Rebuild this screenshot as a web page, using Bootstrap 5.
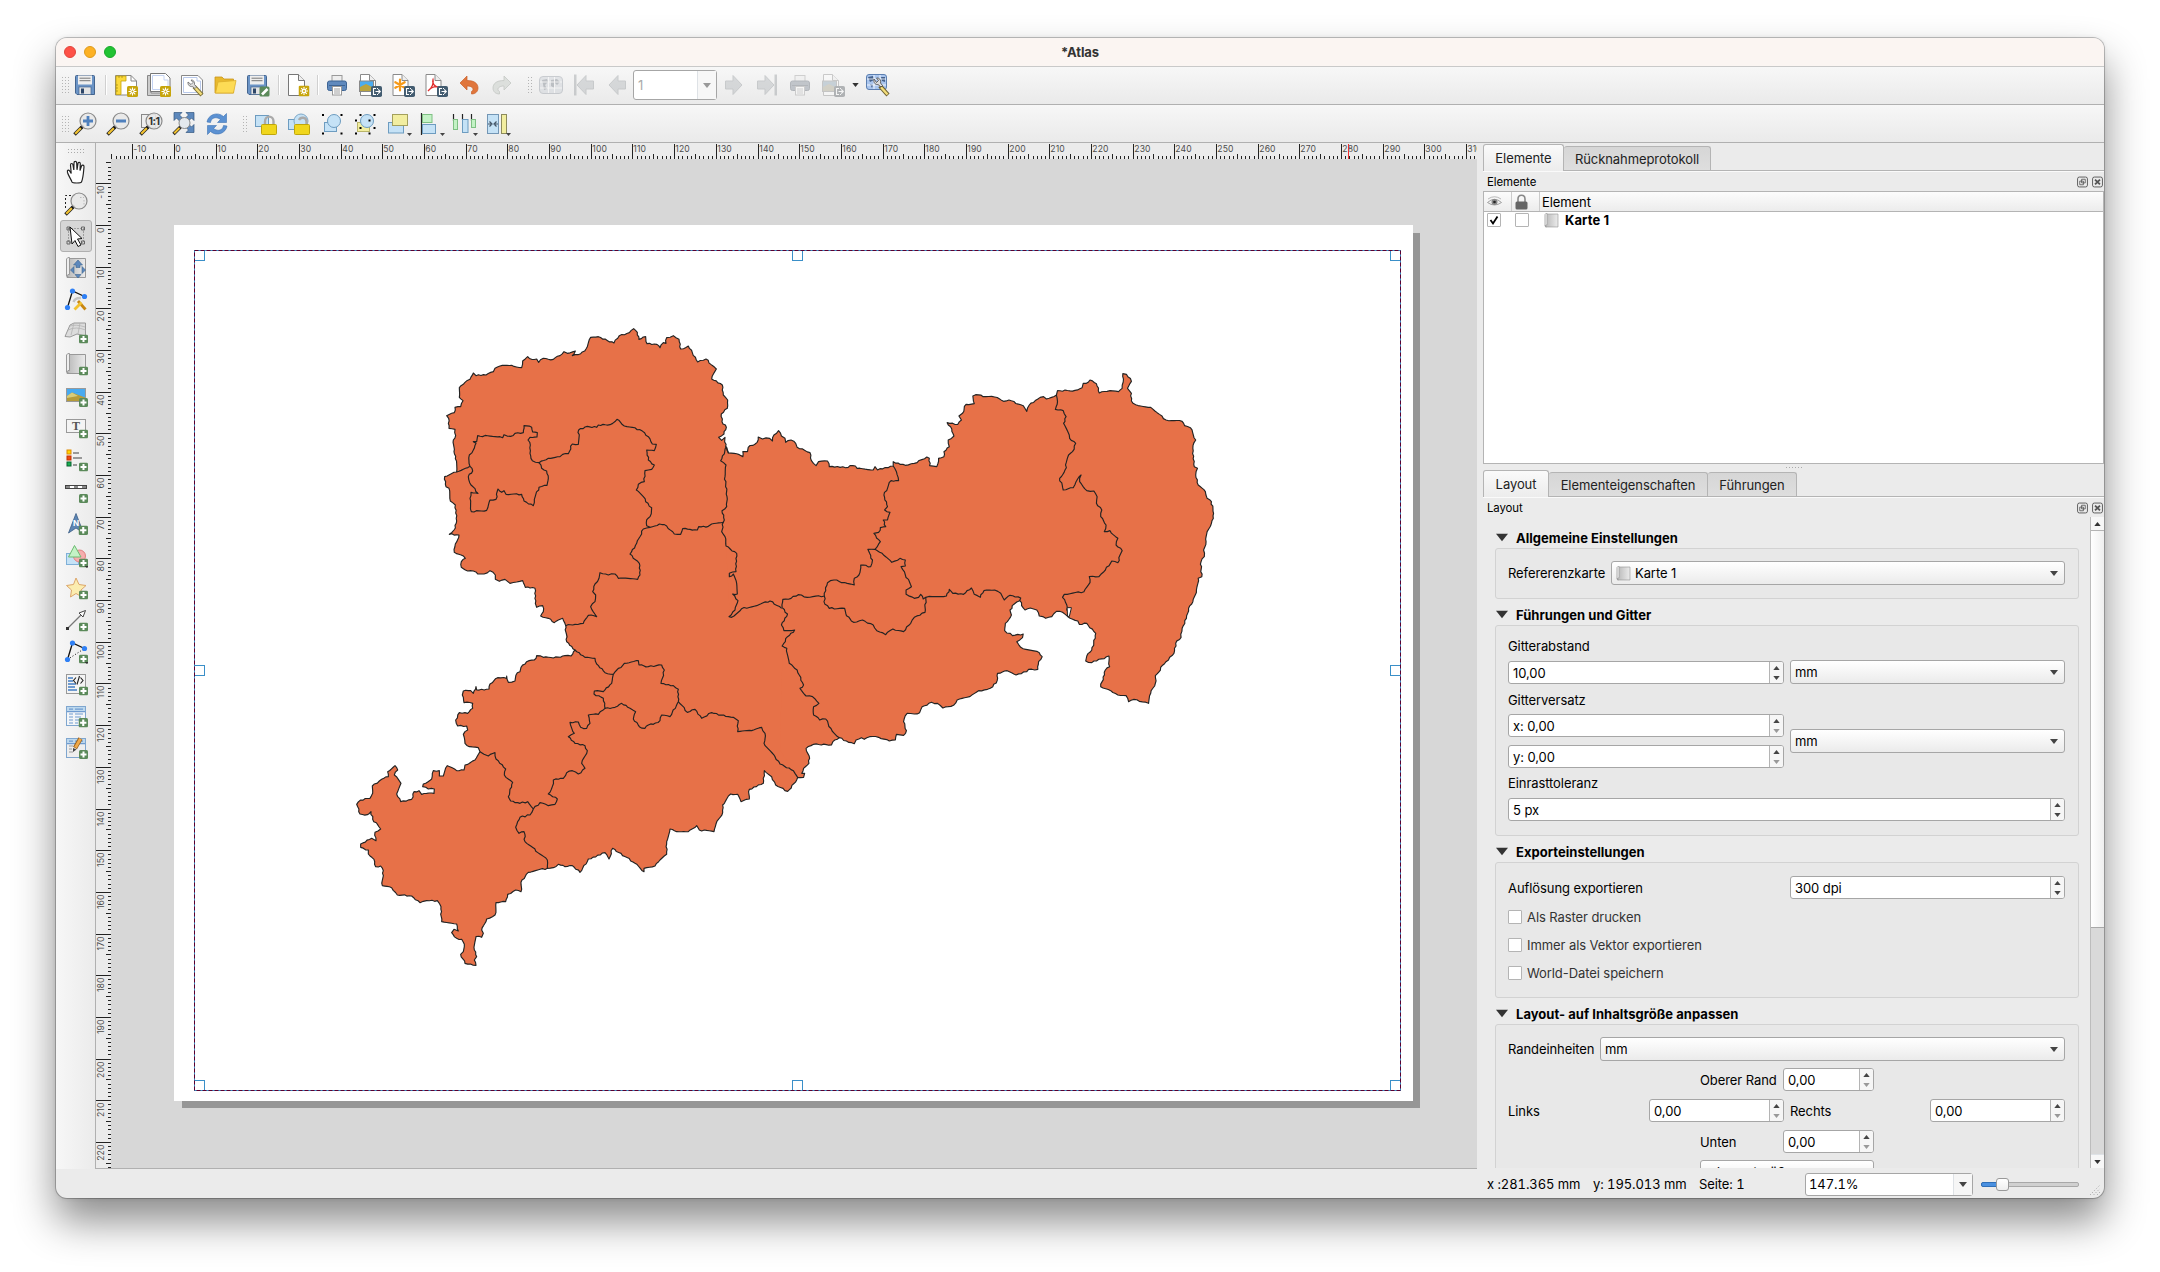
<!DOCTYPE html>
<html lang="de">
<head>
<meta charset="utf-8">
<title>Atlas</title>
<link href="https://cdn.jsdelivr.net/npm/bootstrap@5.3.0/dist/css/bootstrap.min.css" rel="stylesheet">
<style>
body{background:#fff;font-family:Inter,"Liberation Sans",sans-serif;font-size:13px;line-height:16px;letter-spacing:-.08px;color:#000;width:2160px;height:1272px;overflow:hidden;padding:38px 56px}
svg{display:block;flex:none}
.win{width:2048px;height:1160px;border-radius:11px;background:#ebebeb;box-shadow:0 0 0 1px rgba(0,0,0,.22),0 0 5px rgba(0,0,0,.1),0 23px 42px rgba(0,0,0,.46);overflow:hidden}
.titlebar{height:29px;background:#fbf5f2;border-bottom:1px solid #c9c9c9;color:#333}
.lights{left:8px;top:8px;gap:8px}
.lights i{width:12px;height:12px;border-radius:50%;border:1px solid}
.tbar{height:38px;background:linear-gradient(#f7f7f7,#eaeaea);border-bottom:1px solid #b0b0b0;padding-left:5px}
#bar1{padding-bottom:1px}
.tb{width:33px;height:32px;display:flex;align-items:center;justify-content:center;flex:none}
.tb svg{width:24px;height:24px}
.grip{width:7.5px;height:18px;flex:none;background:radial-gradient(circle,#b4b4b4 .8px,transparent 1px) 0 0/3px 3px}
.vsep{width:8px;height:20px;flex:none;display:flex;justify-content:center}
.vsep::before{content:"";width:1px;background:#d0d0d0;box-shadow:1px 0 #fff}
.off{opacity:.4;filter:grayscale(.75)}
.side{width:39px;background:linear-gradient(90deg,#f7f7f7,#ebebeb);padding-top:5px}
.side .tb{width:32px;height:32.05px}
.side .tb.on{background:#d6d6d6;border:1px solid #b0b0b0;border-radius:3px}
.work{width:1382px;border-left:1px solid #b0b0b0;border-bottom:1px solid #b0b0b0;background:#ebebeb}
.dock{width:627px;padding-left:6px}
.dtabs{border-bottom:1px solid #b4b4b4;box-shadow:0 1px #fafafa;height:27px;align-items:flex-end}
.dtab{height:24px;background:linear-gradient(#d6d6d6,#dedede);border:1px solid #b4b4b4;border-bottom:0;border-left-width:0;border-radius:3px 3px 0 0;line-height:25px;text-align:center;color:#222}
.dtab.on{height:27px;background:linear-gradient(#fafafa,#ececec);border-left-width:1px;margin-bottom:-1px;line-height:27px}
.dtitle{font-size:11.4px;height:20px;padding:1px 2px 0 4px}
.tree{height:273px;background:#fff;border:1px solid #b4b4b4}
.thead{height:20px;background:linear-gradient(#fcfcfc,#ececec);border-bottom:1px solid #b4b4b4}
.thead>div{border-right:1px solid #ccc;height:100%;width:28px;display:flex;align-items:center}
.cb{width:14px;height:14px;background:#fff;border:1px solid #b4b4b4;border-radius:1px;flex:none}
.dots{width:17px;height:3px;background:radial-gradient(circle,#aaa .7px,transparent 1px) 0 0/3px 3px}
.scroller{height:651px;overflow:hidden}
.sec{height:21px;margin-top:5px;font-weight:700;padding-left:1px;gap:8px;letter-spacing:.03px}
.gbox{width:584px;background:#e8e8e8;border:1px solid #d2d2d2;border-radius:3px;padding:0 13px 0 12px}
.gbox .lab{height:16px}
.combo{height:24px;border:1px solid #a6a6a6;border-radius:3px;background:linear-gradient(#fff,#ebebeb);padding:0 6px 0 4px}
.spin{height:23px;border:1px solid #a6a6a6;border-radius:3px;background:#fff;padding-left:4px}
.spin .ud{width:14px;height:100%;border-left:1px solid #b4b4b4;background:#f6f6f6;border-radius:0 2px 2px 0;padding:4px 0 3px}
.sbar{width:14px;border-left:1px solid #bcbcbc;background:#d9d9d9}
.sbar .knob{height:397px;background:linear-gradient(90deg,#fff,#efefef);border-bottom:1px solid #a8a8a8}
.sbar .sb{height:14px;background:#f7f7f7;border-bottom:1px solid #b4b4b4}
.status{height:30px;font-feature-settings:"tnum"}
.pg{width:84px;height:30px;border:1px solid #a6a6a6;border-radius:3px;background:#fff;color:#aaa}
.track{width:98px;height:5px;border:1px solid #a8a8a8;border-radius:2px;background:#d0d0d0;position:relative}
.track b{position:absolute;left:-1px;top:-1px;width:18px;height:5px;background:#4a90e0;border:1px solid #2f6fb8;border-radius:2px}
.track i{position:absolute;left:14px;top:-5px;width:13px;height:13px;background:linear-gradient(#fff,#eee);border:1px solid #999;border-radius:3px}
.rt{font-size:8.6px;fill:#4d4d4d;letter-spacing:.1px}
</style>
<script src="https://cdn.jsdelivr.net/npm/bootstrap@5.3.0/dist/js/bootstrap.bundle.min.js"></script>
</head>
<body>
<svg width="0" height="0" class="position-absolute" aria-hidden="true"><defs>
<linearGradient id="gb" x2="0" y2="1"><stop stop-color="#5b8ac9"/><stop offset="1" stop-color="#3a65a0"/></linearGradient>
<linearGradient id="gs" x2="1" y2="0"><stop stop-color="#b8b8b8"/><stop offset="1" stop-color="#ececec"/></linearGradient>
<symbol id="bnew" viewBox="0 0 11 11"><rect width="11" height="11" rx="1.6" fill="#c7a50b"/><path d="M5.500 1.500V9.500M1.500 5.500H9.500M2.700 2.700L8.300 8.300M8.300 2.700L2.700 8.300" stroke="#fff" stroke-width="1.100"/><circle cx="5.500" cy="5.500" r="2" fill="#fff"/><circle cx="5.500" cy="5.500" r="1" fill="#c7a50b"/></symbol>
<symbol id="bexp" viewBox="0 0 11 11"><rect width="11" height="11" rx="1.800" fill="#435c70"/><path d="M5 2.500H2.500V8.500H5M4.500 5.500H9M7.200 3.300L9.300 5.500L7.200 7.700M6 2.500H7M6 8.500H7" fill="none" stroke="#fff" stroke-width="1.100"/></symbol>
<symbol id="bplus" viewBox="0 0 9 9"><rect width="9" height="9" rx="1.500" fill="#5b8a5a"/><path d="M4.500 1.500V7.500M1.500 4.500H7.500" stroke="#fff" stroke-width="2"/></symbol>
<symbol id="lens" viewBox="0 0 24 24"><path d="M9.500 14.500L1.500 22.500" stroke="#222" stroke-width="3.600"/><path d="M8 16L2.200 21.800" stroke="#f2c230" stroke-width="2.200"/><path d="M10.500 13.500L8 16" stroke="#111" stroke-width="2.500"/><circle cx="15" cy="9" r="8" fill="#e8e8e8" fill-opacity=".9" stroke="#8a8a8a" stroke-width="1.200"/></symbol>
<symbol id="page" viewBox="0 0 24 24"><path d="M4.500 1.500H13.500L19.500 7.500V22.500H4.500Z" fill="#fff" stroke="#8a8a8a"/><path d="M13.500 1.500V7.500H19.500" fill="#eee" stroke="#8a8a8a"/></symbol>
<symbol id="save" viewBox="0 0 24 24"><path d="M2.500 3.500Q2.500 2.500 3.500 2.500H20.500Q21.500 2.500 21.500 3.500V21.500H4L2.500 20Z" fill="#6b94c6" stroke="#44658f"/><rect x="5" y="2.500" width="14" height="9" fill="#eee"/><path d="M6.500 5.200H17.500M6.500 7.700H17.500" stroke="#777"/><rect x="6" y="14" width="12" height="7.500" fill="#e4e4e4" stroke="#44658f" stroke-width=".7"/><rect x="8" y="15.500" width="3" height="5" fill="#2d4668"/></symbol>
<symbol id="newlay" viewBox="0 0 24 24"><path d="M1.500 2.500H17L22.500 8V22H1.500Z" fill="#fff" stroke="#888"/><path d="M2 3H12V8H7V21.500H2Z" fill="#fbd93c" stroke="#c7a50b" stroke-width=".8"/><path d="M2 12H4M2 15H4M2 18H4M5 3V5M8 3V5" stroke="#927808" stroke-width=".6"/><path d="M17 2.500V8H22.500" fill="none" stroke="#888"/><use href="#bnew" x="13" y="13" width="11" height="11"/></symbol>
<symbol id="dup" viewBox="0 0 24 24"><path d="M.5 2.500H4V20H20V22.500H.5Z" fill="#ccc" stroke="#888"/><path d="M3.500 .5H18.500L23 5V18.500H3.500Z" fill="#fff" stroke="#777"/><path d="M5.500 2.500H17V7H21V16.500H5.500Z" fill="none" stroke="#c4d3f2"/><use href="#bnew" x="13" y="13" width="11" height="11"/></symbol>
<symbol id="tools" viewBox="0 0 24 24"><path d="M1.500 2.500H18L22.500 7V21.500H1.500Z" fill="#fff" stroke="#888"/><path d="M3.500 4.500H17V8H20.500V19.500H3.500Z" fill="none" stroke="#b8c8ea"/><path d="M14 13.500L22 22" stroke="#7d7036" stroke-width="4.200"/><path d="M14.500 14L21.500 21.500" stroke="#f3dd7a" stroke-width="2.400"/><path d="M8 9C7.500 12.500 10.500 14 12.500 13.500L15 15.500L16.500 14L14.500 11.500C15 9 13.500 6.700 11 7L13 9.500L11 11.500Z" fill="#ddd" stroke="#666" stroke-width=".8"/></symbol>
<symbol id="open" viewBox="0 0 24 24"><path d="M2 4H9L11 6H20.500V20H2Z" fill="#e8b92e" stroke="#c9961c" stroke-width=".8"/><path d="M5 9L23 7.500L20.500 20H2.500Z" fill="#fddb55" stroke="#dcae2b" stroke-width=".8"/></symbol>
<symbol id="saveas" viewBox="0 0 24 24"><use href="#save" x="-1" width="24" height="24"/><rect x="13.500" y="13.500" width="10" height="10" rx="1.500" fill="#5b8a5a"/><path d="M16 21.500L21.500 16" stroke="#fff" stroke-width="2.600"/></symbol>
<symbol id="newpage" viewBox="0 0 24 24"><path d="M2.500 1.500H12.500L18.500 7.500V22.500H2.500Z" fill="#fff" stroke="#777"/><path d="M12.500 1.500V7.500H18.500" fill="#eee" stroke="#777"/><use href="#bnew" x="12.500" y="12.500" width="11" height="11"/></symbol>
<symbol id="print" viewBox="0 0 24 24"><rect x="7" y="2.500" width="10" height="7" fill="#eee" stroke="#999"/><rect x="2.500" y="8" width="19" height="9.500" rx="2" fill="#5f89bd" stroke="#3d6494"/><path d="M4 12.500H20" stroke="#3d6494"/><rect x="7.500" y="13.500" width="9" height="8.500" fill="#fff" stroke="#999"/><path d="M9 16H15M9 18H15M9 20H15" stroke="#888" stroke-width=".8"/></symbol>
<symbol id="eimg" viewBox="0 0 24 24"><use href="#page" x="-2" width="24" height="24"/><rect x="1.500" y="8" width="14" height="10.500" fill="#4bacf0" stroke="#888"/><path d="M2 14L8 11L15 14.500V18H2Z" fill="#b9a440"/><use href="#bexp" x="13" y="13" width="11" height="11"/></symbol>
<symbol id="esvg" viewBox="0 0 24 24"><use href="#page" x="-2.500" width="24" height="24"/><path d="M9 6.500V17.500M4.300 9.200L13.700 14.800M13.700 9.200L4.300 14.800" stroke="#f59a1b" stroke-width="2.200" stroke-linecap="round"/><use href="#bexp" x="13" y="13" width="11" height="11"/></symbol>
<symbol id="epdf" viewBox="0 0 24 24"><use href="#page" x="-2.500" width="24" height="24"/><path d="M4 18C8 15 10 10 9 6.500C7.500 10 11 14.500 15 14C11 13 7 14.500 4 18Z" fill="none" stroke="#e03030" stroke-width="1.300"/><use href="#bexp" x="13" y="13" width="11" height="11"/></symbol>
<symbol id="undo" viewBox="0 0 24 24"><path d="M3 10L10 3V7.500C18 7.500 21 11 21 15C21 18.500 18.500 21 14.500 21V18.500C17 17.500 17 13 10 13V17Z" fill="#e0763c" stroke="#c9602a" stroke-width=".7"/></symbol>
<symbol id="redo" viewBox="0 0 24 24"><path d="M21 10L14 3V7.500C6 7.500 3 11 3 15C3 18.500 5.500 21 9.500 21V18.500C7 17.500 7 13 14 13V17Z" fill="#dcdfdc" stroke="#c4c8c4" stroke-width=".8"/></symbol>
<symbol id="atlas" viewBox="0 0 24 24"><rect x=".5" y="3.500" width="23" height="17" rx="3.500" fill="#b9cfea" stroke="#7796bd"/><path d="M3 7L8 6L9 9L6 12L8 16L5 17L4 11ZM12 7L18 6L21 9L18 12L16 10L15 15L12 13Z" fill="#5878a3"/><path d="M9.500 4V20M15.500 4V20M1 9H23M1 15H23" stroke="#fff" stroke-width=".9"/></symbol>
<symbol id="aset" viewBox="0 0 24 24"><rect x=".5" y="1.500" width="20" height="15" rx="2.500" fill="#a9c5ee" stroke="#5c7fb0"/><path d="M2 4L7 3L8 7L4 9ZM4 11L7 12L6 15ZM15 4L19 4L19 9L16 8Z" fill="#44608a"/><path d="M8 2V16M14 2V16M1 6H20M1 12H20" stroke="#fff" stroke-width=".8"/><path d="M14 13L22 22" stroke="#6d6130" stroke-width="4.200"/><path d="M15 14.200L21.500 21.500" stroke="#f3dd7a" stroke-width="2.400"/><path d="M8 6C7 10 10 12 12 11.500L15 14L16.500 12.500L14.500 10C15.500 7 13 4.500 10.500 5L12.500 7.500L10.500 9.500Z" fill="#ddd" stroke="#444" stroke-width=".8"/></symbol>
<symbol id="arrL" viewBox="0 0 24 24"><path d="M4 12L13 2.500V8H20.500V16H13V21.500Z" fill="#9fb4c2" stroke="#7e93a3"/></symbol>
<symbol id="arrR" viewBox="0 0 24 24"><path d="M20 12L11 2.500V8H3.500V16H11V21.500Z" fill="#9fb4c2" stroke="#7e93a3"/></symbol>
<symbol id="first" viewBox="0 0 24 24"><rect x="2" y="1.500" width="2.500" height="21" fill="#8499a8"/><path d="M5 12L14 2.500V8H21.500V16H14V21.500Z" fill="#9fb4c2" stroke="#7e93a3"/></symbol>
<symbol id="last" viewBox="0 0 24 24"><rect x="19.500" y="1.500" width="2.500" height="21" fill="#8499a8"/><path d="M19 12L10 2.500V8H2.500V16H10V21.500Z" fill="#9fb4c2" stroke="#7e93a3"/></symbol>
<symbol id="zin" viewBox="0 0 24 24"><use href="#lens" width="24" height="24"/><path d="M15 4V14M10 9H20" stroke="#4f80bd" stroke-width="2.800"/></symbol>
<symbol id="zout" viewBox="0 0 24 24"><use href="#lens" width="24" height="24"/><path d="M10 9H20" stroke="#4f80bd" stroke-width="2.800"/></symbol>
<symbol id="z1" viewBox="0 0 24 24"><rect x="2.500" y="2.500" width="14" height="13" fill="#eee" stroke="#888"/><use href="#lens" width="24" height="24"/><text x="15" y="13" font-size="10.500" font-weight="700" text-anchor="middle" letter-spacing="-.6" fill="#333">1:1</text></symbol>
<symbol id="zfull" viewBox="0 0 24 24"><path d="M2 .5H10L7.500 3L11 6.500L8 9.500L4.500 6L2 8.500ZM22 .5H14L16.500 3L13 6.500L16 9.500L19.500 6L22 8.500ZM22 20.500H14L16.500 18L13 14.500L16 11.500L19.500 15L22 12.500Z" fill="#5d88bc" stroke="#33587f" stroke-width=".7"/><path d="M8.500 15L1.500 22" stroke="#222" stroke-width="3.400"/><path d="M7.500 16L2.200 21.300" stroke="#f2c230" stroke-width="2"/><circle cx="12.500" cy="11" r="5.500" fill="#e4e9ee" stroke="#8a8a8a"/></symbol>
<symbol id="refresh" viewBox="0 0 24 24"><path d="M2 10C3 3 12 -1 18.500 4.500L21.500 1.500V10.500H12.500L15.500 7.500C11 4 6 6 5.500 10.500Z" fill="#5b91d2" stroke="#3f73b4" stroke-width=".6"/><path d="M22 14C21 21 12 25 5.500 19.500L2.500 22.500V13.500H11.500L8.500 16.500C13 20 18 18 18.500 13.500Z" fill="#5b91d2" stroke="#3f73b4" stroke-width=".6"/></symbol>
<symbol id="lock" viewBox="0 0 24 24"><rect x="1.500" y="3.500" width="13" height="11" fill="#c5e2f6" stroke="#6d9cc0"/><path d="M11 13V9.500C11 3 19.500 3 19.500 9.500V13" fill="none" stroke="#aaa" stroke-width="2.400"/><rect x="7.500" y="12.500" width="15" height="10" rx="1" fill="#f0d61c" stroke="#bfa60c"/></symbol>
<symbol id="unlock" viewBox="0 0 24 24"><rect x="1.500" y="7.500" width="11" height="10" fill="#c5e2f6" stroke="#6d9cc0"/><circle cx="14" cy="9" r="7" fill="#c5e2f6" stroke="#7fa9c9"/><path d="M19.500 13V9.500C19.500 5 13.500 4.500 12 8" fill="none" stroke="#aaa" stroke-width="2.400"/><rect x="7.500" y="12.500" width="15" height="10" rx="1" fill="#f0d61c" stroke="#bfa60c"/></symbol>
<symbol id="group" viewBox="0 0 24 24"><rect x="4.500" y="10.500" width="12" height="9" fill="#c5e2f6" stroke="#6d9cc0"/><circle cx="14" cy="9" r="6.500" fill="#c5e2f6" stroke="#6d9cc0"/><path d="M2 2h2v2H2zM20.500 2h2v2h-2zM2 20.500h2v2H2zM20.500 20.500h2v2h-2z" fill="#000"/></symbol>
<symbol id="ungroup" viewBox="0 0 24 24"><rect x="4.500" y="10.500" width="12" height="9" fill="#f2eea0" stroke="#b9b468"/><circle cx="14" cy="9" r="6.500" fill="#c5e2f6" stroke="#6d9cc0"/><path d="M6.500 2h2v2h-2zM20.500 2h2v2h-2zM2 7.500h2v2H2zM2 20.500h2v2H2zM15.500 20.500h2v2h-2zM20.500 15h2v2h-2zM6.500 15h2v2h-2zM15.500 7.500h2v2h-2z" fill="#000"/></symbol>
<symbol id="raise" viewBox="0 0 24 24"><rect x="2.500" y="10.500" width="15" height="10.500" fill="#c5e2f6" stroke="#6d9cc0"/><rect x="6.500" y="2.500" width="15" height="11" fill="#f2eea0" stroke="#a3a05c"/></symbol>
<symbol id="align" viewBox="0 0 24 24"><path d="M2.500 1V23" stroke="#222" stroke-width="1.200"/><rect x="3.500" y="2.500" width="9.500" height="8" fill="#c4f2c6" stroke="#7fc084"/><rect x="3.500" y="12.500" width="13" height="9" fill="#c5e2f6" stroke="#6d9cc0"/></symbol>
<symbol id="distr" viewBox="0 0 24 24"><path d="M1.500 2V9M10.500 2V8M19.500 2V9" stroke="#222" stroke-width="1.200"/><rect x="1.500" y="7.500" width="4" height="10" fill="#c4f2c6" stroke="#7fc084"/><rect x="10.500" y="7.500" width="5.500" height="13" fill="#c5e2f6" stroke="#6d9cc0"/><rect x="19.500" y="7.500" width="4" height="8" fill="#c4f2c6" stroke="#7fc084"/></symbol>
<symbol id="resize" viewBox="0 0 24 24"><rect x="2.500" y="2.500" width="11" height="19" fill="#c5e2f6" stroke="#7396b5"/><rect x="16.500" y="2.500" width="5" height="19" fill="#f2eea0" stroke="#8d8b5c"/><path d="M3 12H6M4.500 9.500L7 12L4.500 14.500M13 12H10M11.500 9.500L9 12L11.500 14.500" fill="none" stroke="#456" stroke-width="1.200"/></symbol>
<symbol id="hand" viewBox="0 0 24 24"><path d="M8 22C7 19 4.500 16 3.500 12.500C2.800 9.800 5 9.300 6 11.500L7.200 13.500L6.500 5C6.500 3 8.700 3 9 5L9.800 10L10 3C10 .8 12.500 .8 12.700 3L13 9.800L14 3.500C14.300 1.700 16.500 2 16.300 4L16 10.500L17.500 6C18.200 4.500 20.300 5 20 7C19.500 11 19.500 17 17.500 22C17 23.300 8.500 23.300 8 22Z" fill="#fff" stroke="#222" stroke-width="1.200"/></symbol>
<symbol id="zoomt" viewBox="0 0 24 24"><path d="M1.500 16V3.500H12" fill="none" stroke="#222" stroke-dasharray="2 2"/><use href="#lens" width="24" height="24"/><path d="M16 5.500H20M20 8V13" stroke="#bbb" stroke-dasharray="1.500 1.500"/></symbol>
<symbol id="sel" viewBox="0 0 24 24"><g fill="none" stroke="#666"><path d="M4.500 4.500H19.500V18.500H4.500Z" stroke-dasharray="1 2"/><path d="M3 3h3v3H3zM17.500 3h3v3h-3zM3 17h3v3H3zM17.500 17h3v3h-3z"/></g><path d="M6 3L18 14.500L13.500 15L17 21L14 22.500L11 16.500L8 20Z" fill="#fff" stroke="#111"/></symbol>
<symbol id="roll" viewBox="0 0 24 24"><path d="M5.500 2.500H21.500V21.500H3V4Z" fill="url(#gs)" stroke="#999"/><path d="M2.500 20V3Q3.500 1 5.500 1.500V18.500H4L2.500 20L5 21.500" fill="#eee" stroke="#999"/></symbol>
<symbol id="movec" viewBox="0 0 24 24"><use href="#roll" width="24" height="24"/><path d="M14 4L18.500 9H16V11.500H12V9H9.500ZM14 22L17 18.500H11ZM6.500 14L10 10.500V17.500ZM21.500 14L18 10.500V17.500Z" fill="#5d88bc" stroke="#3e658f" stroke-width=".6"/></symbol>
<symbol id="nodes" viewBox="0 0 24 24"><path d="M3.500 19.500L8.500 3L20.500 8.500" fill="none" stroke="#111" stroke-width="1.300"/><path d="M3.500 19.500L20.500 8.500" stroke="#111" stroke-dasharray="1 2"/><circle cx="3.500" cy="19.500" r="2.600" fill="#2f80f5"/><circle cx="8.500" cy="3" r="2.600" fill="#2f80f5"/><circle cx="20.500" cy="8.500" r="2.600" fill="#2f80f5"/></symbol>
<symbol id="nedit" viewBox="0 0 24 24"><path d="M3.500 19.500L8.500 3L20.500 8.500" fill="none" stroke="#111" stroke-width="1.300"/><circle cx="3.500" cy="19.500" r="2.600" fill="#2f80f5"/><circle cx="8.500" cy="3" r="2.600" fill="#2f80f5"/><circle cx="20.500" cy="8.500" r="2.600" fill="#2f80f5"/><path d="M9.500 14Q11 9.500 17 10" fill="none" stroke="#c4c4c4" stroke-width="2.400"/><path d="M14 13L21.500 21.500" stroke="#c8860f" stroke-width="2.800"/><path d="M10.500 21.500L17.500 14.500" stroke="#f2c230" stroke-width="2.800"/></symbol>
<symbol id="m3d" viewBox="0 0 24 24"><path d="M1 16.500L6 5L10 3H21.500V16L13 14L6 17Z" fill="#dcdcdc" stroke="#999"/><path d="M10 3L7 15M16 3L14 14M4 10Q12 6 21.500 10M6 6Q12 4 21 7" fill="none" stroke="#b4b4b4" stroke-width=".8"/><use href="#bplus" x="15" y="14.500" width="9" height="9"/></symbol>
<symbol id="amap" viewBox="0 0 24 24"><use href="#roll" width="24" height="24"/><use href="#bplus" x="15" y="14.500" width="9" height="9"/></symbol>
<symbol id="apic" viewBox="0 0 24 24"><rect x="2.500" y="4.500" width="19" height="13" fill="#48aaf0" stroke="#999"/><path d="M3 12L8 8.500L21 13.500V17H3Z" fill="#b59b3a"/><path d="M3 12L8 8.500L14 12L3 14Z" fill="#d8cc7a"/><use href="#bplus" x="15" y="14" width="9" height="9"/></symbol>
<symbol id="alab" viewBox="0 0 24 24"><rect x="2.500" y="3.500" width="19" height="13" fill="#f4f4f4" stroke="#999"/><text x="12" y="14" font-family="Liberation Serif" font-size="12" font-weight="700" fill="#555" text-anchor="middle">T</text><use href="#bplus" x="15" y="13.500" width="9" height="9"/></symbol>
<symbol id="aleg" viewBox="0 0 24 24"><rect x="3" y="2" width="4" height="4" fill="#ffd400" stroke="#e08a00"/><rect x="3" y="8" width="4" height="4" fill="#f04a10" stroke="#c03000"/><rect x="3" y="14" width="4" height="4" fill="#18b050" stroke="#0a6030"/><path d="M9 5H15M9 10H18M9 17H13" stroke="#999" stroke-width="2"/><use href="#bplus" x="15" y="14.500" width="9" height="9"/></symbol>
<symbol id="ascl" viewBox="0 0 24 24"><rect x="1.500" y="5.500" width="21" height="3" fill="#fff" stroke="#444"/><path d="M2 7H6M10 7H14M18 7H22" stroke="#888" stroke-width="2"/><use href="#bplus" x="15" y="14" width="9" height="9"/></symbol>
<symbol id="anor" viewBox="0 0 24 24"><path d="M12 1.500L19.500 21L12 16L4.500 21Z" fill="#5d86b5" stroke="#3b5d85" stroke-width=".8"/><text x="12" y="14" font-size="8" font-weight="700" fill="#fff" text-anchor="middle">N</text><use href="#bplus" x="14.500" y="13.500" width="9.500" height="9.500"/></symbol>
<symbol id="ashp" viewBox="0 0 24 24"><rect x="2.500" y="9.500" width="12" height="11" fill="#c5e2f6" stroke="#7fb0d8"/><circle cx="15.500" cy="12" r="6" fill="#f6aeae" stroke="#e07f7f"/><path d="M10.500 1.500L17 13H4.500Z" fill="#c4f2c6" stroke="#6dbb72"/><use href="#bplus" x="15" y="14.500" width="9" height="9"/><path d="M20.500 22H25L23 24Z" fill="#333"/></symbol>
<symbol id="astr" viewBox="0 0 24 24"><path d="M12 2L15 8.500L22 9.500L17 14L18 21L12 17.500L6.500 21L7.500 14L2.500 9.500L9.500 8.500Z" fill="#fbedb0" stroke="#dca66a"/><use href="#bplus" x="15" y="14.500" width="9" height="9"/></symbol>
<symbol id="aarr" viewBox="0 0 24 24"><path d="M3.500 20.500L18 6" stroke="#777" stroke-width="1.300"/><path d="M2 19h3v3H2z" fill="#333"/><path d="M21.500 2.500L15 5L19 9Z" fill="#fff" stroke="#444"/><use href="#bplus" x="15" y="14.500" width="9" height="9"/></symbol>
<symbol id="anod" viewBox="0 0 24 24"><use href="#nodes" width="24" height="24"/><use href="#bplus" x="15" y="14.500" width="9" height="9"/><path d="M20.500 22H25L23 24Z" fill="#333"/></symbol>
<symbol id="ahtm" viewBox="0 0 24 24"><rect x="2.500" y="2.500" width="19" height="19" fill="#f4f4f4" stroke="#999"/><path d="M4 6H9M4 9H9M4 12H12M4 15H11M4 18H13" stroke="#6f9bd0" stroke-width="1.800"/><path d="M12 5.500L9.500 8.500L12 11.500M16.500 5.500L19 8.500L16.500 11.500M15.500 4L13 12.500" fill="none" stroke="#222" stroke-width="1.100"/><use href="#bplus" x="15" y="14.500" width="9" height="9"/></symbol>
<symbol id="atab" viewBox="0 0 24 24"><rect x="2.500" y="2.500" width="19" height="19" fill="#f4f6f8" stroke="#7fa6cf"/><rect x="3" y="3" width="18" height="4.500" fill="#bcd8ee"/><path d="M5 5.200H9M11 5.200H19M3 7.700H21" stroke="#6f9bd0" stroke-width="1.300"/><path d="M5 10H9M11 10H19M5 13H9M11 13H17M5 16H9M11 16H15M5 19H9M11 19H14" stroke="#6f9bd0"/><use href="#bplus" x="14.500" y="14" width="9.500" height="9.500"/></symbol>
<symbol id="afix" viewBox="0 0 24 24"><rect x="2.500" y="2.500" width="19" height="19" fill="#eee" stroke="#7fa6cf"/><rect x="3" y="3" width="18" height="4.500" fill="#bcd8ee"/><path d="M5 5.200H9M11 5.200H19M3 7.700H21" stroke="#6f9bd0" stroke-width="1.300"/><path d="M5 10H9M5 13H8M5 16H9" stroke="#999"/><path d="M16.500 2.500L11 12" stroke="#9a6420" stroke-width="4.500"/><path d="M16.500 2.800L11.500 11.500" stroke="#f0a94a" stroke-width="2.800"/><path d="M9 12L12.500 13.500L9 16Z" fill="#444"/><use href="#bplus" x="15" y="14" width="9" height="9"/></symbol>
<symbol id="dn" viewBox="0 0 8 5"><path d="M0 0H8L4 5Z"/></symbol>
<symbol id="up" viewBox="0 0 8 5"><path d="M0 5H8L4 0Z"/></symbol>
<symbol id="bfl" viewBox="0 0 12 12"><rect x=".6" y=".6" width="10.800" height="10.800" rx="2" fill="none" stroke="#555"/><path d="M5 3h4v4H5zM3 5h4v4H3z" fill="#eee" stroke="#555" stroke-width=".9"/></symbol>
<symbol id="bcl" viewBox="0 0 12 12"><rect x=".6" y=".6" width="10.800" height="10.800" rx="2" fill="none" stroke="#555"/><path d="M3.300 3.300L8.700 8.700M8.700 3.300L3.300 8.700" stroke="#555" stroke-width="2"/></symbol>
</defs></svg>

<div class="win d-flex flex-column">
  <div class="titlebar position-relative d-flex align-items-center justify-content-center fw-bold flex-shrink-0">
    <div class="lights position-absolute d-flex"><i style="background:#fe5147;border-color:#e0453c"></i><i style="background:#fdb124;border-color:#dd9a1c"></i><i style="background:#22c333;border-color:#1aa82a"></i></div>
    *Atlas
  </div>
  <div class="tbar d-flex align-items-center flex-shrink-0" id="bar1"></div>
  <div class="tbar d-flex align-items-center flex-shrink-0" id="bar2"></div>

  <div class="d-flex flex-grow-1">
    <div class="side d-flex flex-column align-items-center" id="side"></div>
    <div class="work"><svg id="canvas" width="1381" height="1025" viewBox="96 143 1381 1025"></svg></div>

    <div class="dock d-flex">
      <div class="flex-grow-1">
        <div class="dtabs d-flex" style="margin-top:1px"><div class="dtab on" style="width:81px">Elemente</div><div class="dtab" style="width:147px">Rücknahmeprotokoll</div></div>
        <div class="dtitle d-flex align-items-center justify-content-between"><span>Elemente</span><span class="d-flex gap-1" style="margin-right:-1px"><svg width="11" height="12"><use href="#bfl"/></svg><svg width="11" height="12"><use href="#bcl"/></svg></span></div>
        <div class="tree">
          <div class="thead d-flex">
            <div style="padding-left:3px"><svg width="15" height="12" viewBox="0 0 15 12"><path d="M.5 6.500Q7.500 0 14.500 6.500Q7.500 11.500 .5 6.500Z" fill="#eee" stroke="#999" stroke-width=".9"/><path d="M1 3Q7.500 -1.500 14 3" fill="none" stroke="#aaa" stroke-width=".8"/><circle cx="7.500" cy="6" r="3" fill="#888"/><circle cx="7.500" cy="6" r="1.300" fill="#222"/></svg></div>
            <div style="padding:1px 0 0 3px"><svg width="13" height="16" viewBox="0 0 13 16"><path d="M3 8V5Q3 1.200 6.500 1.200T10 5V8" fill="none" stroke="#888" stroke-width="1.600"/><rect x=".5" y="7.500" width="12" height="8" rx="1.500" fill="#666"/></svg></div>
            <div class="border-0 ps-1" style="width:120px"><span style="margin-left:-2px;padding-top:1px">Element</span></div>
          </div>
          <div class="d-flex align-items-center" style="height:16px;padding:0 0 0 3px">
            <span class="cb"><svg width="12" height="12" viewBox="0 0 12 12"><path d="M2.500 6L5 9.500L9.500 2.500" fill="none" stroke="#000" stroke-width="1.800"/></svg></span>
            <span class="cb" style="margin-left:14px"></span>
            <svg width="15" height="15" viewBox="1 1 22 22" style="margin:0 6px 0 15px"><use href="#roll" width="24" height="24"/></svg><b style="letter-spacing:.1px">Karte 1</b>
          </div>
        </div>
        <div class="d-flex justify-content-center" style="height:6px;padding-top:2px"><span class="dots"></span></div>
        <div class="dtabs d-flex"><div class="dtab on" style="width:66px">Layout</div><div class="dtab" style="width:159px">Elementeigenschaften</div><div class="dtab" style="width:89px">Führungen</div></div>
        <div class="dtitle d-flex align-items-center justify-content-between" style="padding-top:2px"><span>Layout</span><span class="d-flex gap-1" style="margin-right:-1px"><svg width="11" height="12"><use href="#bfl"/></svg><svg width="11" height="12"><use href="#bcl"/></svg></span></div>
        <div class="scroller d-flex justify-content-between">
          <div style="padding:5px 0 0 12px">
            <div class="sec d-flex align-items-center"><svg width="12" height="9" fill="#333"><use href="#dn" width="12" height="9"/></svg><span>Allgemeine Einstellungen</span></div>
            <div class="gbox" style="height:51px;padding-top:12px">
              <div class="d-flex align-items-center justify-content-between"><span>Refererenzkarte</span><div class="combo d-flex align-items-center" style="width:454px"><svg width="15" height="15" viewBox="1 1 22 22" class="me-1"><use href="#roll" width="24" height="24"/></svg><span class="flex-grow-1">Karte 1</span><svg width="8" height="5" fill="#444"><use href="#dn"/></svg></div></div>
            </div>
            <div class="sec d-flex align-items-center"><svg width="12" height="9" fill="#333"><use href="#dn" width="12" height="9"/></svg><span>Führungen und Gitter</span></div>
            <div class="gbox" style="height:211px;padding-top:12px">
              <div class="lab">Gitterabstand</div>
              <div class="d-flex align-items-end justify-content-between" style="margin-top:6px"><div class="spin" data-w="276" data-v="10,00"></div><div class="combo d-flex align-items-center justify-content-between" style="width:275px"><span>mm</span><svg width="8" height="5" fill="#444"><use href="#dn"/></svg></div></div>
              <div class="lab" style="margin-top:8px">Gitterversatz</div>
              <div class="d-flex align-items-center justify-content-between" style="margin-top:6px;height:54px"><div class="d-flex flex-column gap-2"><div class="spin" data-w="276" data-v="x: 0,00" data-m="1"></div><div class="spin" data-w="276" data-v="y: 0,00" data-m="1"></div></div><div class="combo d-flex align-items-center justify-content-between" style="width:275px"><span>mm</span><svg width="8" height="5" fill="#444"><use href="#dn"/></svg></div></div>
              <div class="lab" style="margin-top:7px">Einrasttoleranz</div>
              <div class="spin" style="margin-top:7px" data-w="557" data-v="5 px"></div>
            </div>
            <div class="sec d-flex align-items-center"><svg width="12" height="9" fill="#333"><use href="#dn" width="12" height="9"/></svg><span>Exporteinstellungen</span></div>
            <div class="gbox" style="height:136px;padding-top:13px">
              <div class="d-flex align-items-center justify-content-between mb-1"><span>Auflösung exportieren</span><div class="spin" data-w="275" data-v="300 dpi"></div></div>
              <div class="d-flex align-items-center" style="height:28px;gap:5px;color:#333"><span class="cb"></span>Als Raster drucken</div>
              <div class="d-flex align-items-center" style="height:28px;gap:5px;color:#333"><span class="cb"></span>Immer als Vektor exportieren</div>
              <div class="d-flex align-items-center" style="height:28px;gap:5px;color:#333"><span class="cb"></span>World-Datei speichern</div>
            </div>
            <div class="sec d-flex align-items-center"><svg width="12" height="9" fill="#333"><use href="#dn" width="12" height="9"/></svg><span>Layout- auf Inhaltsgröße anpassen</span></div>
            <div class="gbox" style="height:200px;padding-top:12px">
              <div class="d-flex align-items-center justify-content-between"><span>Randeinheiten</span><div class="combo d-flex align-items-center justify-content-between" style="width:465px"><span>mm</span><svg width="8" height="5" fill="#444"><use href="#dn"/></svg></div></div>
              <div class="d-flex align-items-center" style="margin:7px 0 0 192px"><span style="width:83px">Oberer Rand</span><div class="spin" data-w="91" data-v="0,00" data-m="1"></div></div>
              <div class="d-flex align-items-center mt-2"><span style="width:141px">Links</span><div class="spin" data-w="135" data-v="0,00" data-m="1"></div><span style="width:140px;margin-left:6px">Rechts</span><div class="spin" data-w="135" data-v="0,00" data-m="1"></div></div>
              <div class="d-flex align-items-center" style="margin:8px 0 0 192px"><span style="width:83px">Unten</span><div class="spin" data-w="91" data-v="0,00" data-m="1"></div></div>
              <div class="combo d-flex align-items-center justify-content-center" style="margin:7px 0 0 192px;width:174px">Layoutgröße anpassen</div>
            </div>
          </div>
          <div class="sbar d-flex flex-column"><div class="sb d-flex align-items-center justify-content-center"><svg width="7" height="4" fill="#333"><use href="#up"/></svg></div><div class="knob"></div><div class="flex-grow-1"></div><div class="sb border-bottom-0 border-top d-flex align-items-center justify-content-center"><svg width="7" height="4" fill="#333"><use href="#dn"/></svg></div></div>
        </div>
      </div>
    </div>
  </div>

  <div class="status d-flex align-items-center flex-shrink-0" style="padding-left:1431px">
    <span style="width:106px">x :281.365 mm</span><span style="width:106px">y: 195.013 mm</span><span style="width:106px">Seite: 1</span>
    <div class="spin d-flex align-items-center" style="width:168px;padding-left:3px"><span class="flex-grow-1">147.1%</span><span class="d-flex align-items-center justify-content-center h-100 border-start" style="width:19px;background:#f6f6f6"><svg width="8" height="5" fill="#444"><use href="#dn"/></svg></span></div>
    <div class="track" style="margin-left:8px"><b></b><i></i></div>
    <svg width="12" height="12" viewBox="0 0 12 12" class="align-self-end ms-auto" style="margin:0 3px 3px 0"><path d="M1 11L11 1M4.500 11L11 4.500M8 11L11 8" stroke="#aaa" stroke-dasharray="1.200 1.800"/></svg>
  </div>
</div>

<script>
const ic=(n,c='')=>`<div class="tb ${c}"><svg viewBox="0 0 24 24" overflow="visible"><use href="#${n}"/></svg></div>`;
const icd=n=>`<div class="tb"><svg viewBox="0 0 24 24" overflow="visible"><use href="#${n}"/><path d="M21 21H26L23.500 24Z" fill="#444"/></svg></div>`;
const sep='<div class="vsep"></div>', grip='<div class="grip"></div>';
document.getElementById('bar1').innerHTML=grip+ic('save')+sep+['newlay','dup','tools','open','saveas'].map(n=>ic(n)).join('')+'<div class="vsep" style="width:7px"></div>'+ic('newpage')+'<div class="vsep" style="width:6px"></div>'
 +['print','eimg','esvg','epdf','undo','redo'].map(n=>ic(n)).join('')+'<div style="width:8px"></div>'+grip
 +['atlas','first','arrL'].map(n=>ic(n,'off')).join('')
 +'<div class="pg d-flex align-items-center"><span class="flex-grow-1 ps-1">1</span><span class="h-100 border-start d-flex align-items-center justify-content-center" style="width:19px;background:#f7f7f7"><svg width="8" height="5" fill="#999"><use href="#dn"/></svg></span></div>'
 +['arrR','last','print','eimg'].map(n=>ic(n,'off')).join('')+'<div style="width:12px"><svg width="7" height="4" fill="#333" style="margin-left:3px"><use href="#dn"/></svg></div>'+ic('aset');
document.getElementById('bar2').innerHTML=grip+['zin','zout','z1','zfull','refresh'].map(n=>ic(n)).join('')+'<div style="width:8px"></div>'+grip+['lock','unlock','group','ungroup'].map(n=>ic(n)).join('')+['raise','align','distr','resize'].map(icd).join('');
document.getElementById('side').innerHTML='<div class="dots" style="height:6px;margin-bottom:1.500px;flex:none"></div>'+['hand','zoomt'].map(n=>ic(n)).join('')+ic('sel','on')+['movec','nedit','m3d','amap','apic','alab','aleg','ascl','anor','ashp','astr','aarr','anod','ahtm','atab','afix'].map(n=>ic(n)).join('');

document.querySelectorAll('.spin[data-v]').forEach(s=>{
  s.classList.add('d-flex','align-items-center');s.style.width=s.dataset.w+'px';
  s.innerHTML=`<span class="flex-grow-1" style="padding-top:1px">${s.dataset.v}</span><span class="ud d-flex flex-column align-items-center justify-content-between"><svg width="7" height="4" fill="#444"><use href="#up"/></svg><svg width="7" height="4" fill="${s.dataset.m?'#999':'#444'}"><use href="#dn"/></svg></span>`;
});

/* rulers: 4.168 px per millimetre */
const mm=4.168, x0=174.5, y0=225.5, R=v=>Math.floor(v)+.5;
let g='<rect x="111" y="159" width="1366" height="1009" fill="#d7d7d7"/><rect x="182" y="233" width="1238" height="875" fill="#969696"/><rect x="174" y="225" width="1239" height="876" fill="#fff"/>';
let d='',t='';
for(let i=-15;i<=312;i++){const x=R(x0+i*mm);if(x<111||x>1477)continue;d+=`M${x} 159V${i%10==0?144:i%5==0?154:156}`;if(i%10==0)t+=`<text class="rt" x="${x+.8}" y="152">${i}</text>`;}
for(let i=-16;i<=226;i++){const y=R(y0+i*mm);if(y<159||y>1168)continue;d+=`M111 ${y}H${i%10==0?96:i%5==0?106:108}`;if(i%10==0)t+=`<text class="rt" text-anchor="end" transform="translate(104 ${y+2}) rotate(-90)">${i}</text>`;}
g+=`<path d="${d}" stroke="#222" fill="none"/>${t}<path d="M1348.500 144V159" stroke="#f03030"/>`;

/* district geometry, one block per map tile */
const P=s=>s.trim().split(/\s+/).map(p=>p.split(',').map(Number));
const rough=p=>{const o=[p[0]];for(let i=1;i<p.length;i++){const a=p[i-1],b=p[i],L=Math.hypot(b[0]-a[0],b[1]-a[1]),n=Math.floor(L/7);
  for(let k=1;k<n;k++){const h=Math.sin(a[0]*12.9+a[1]*78.2+k*37.7)*43758.5,r=(h-Math.floor(h)-.5)*4.600,f=k/n;o.push([a[0]+(b[0]-a[0])*f-(b[1]-a[1])/L*r,a[1]+(b[1]-a[1])*f+(b[0]-a[0])/L*r]);}o.push(b);}return o;};
const D=p=>'M'+p.map(q=>q[0].toFixed(1)+' '+q[1].toFixed(1)).join('L');
const tiles=[
{t:'translate(340 300) scale(.33333)',
o:`677,977 668,955 655,960 643,968 625,955 602,948 610,935 608,917 590,922 586,910 585,865 556,862 548,842 530,846 510,850 495,838 478,844 466,838 466,825 450,812 432,822 413,822 400,813 383,813 364,802 364,785 376,775 370,768 343,757 346,732 357,705 328,703 342,690 350,663 346,615 331,603 327,565 318,560 314,530 350,516 350,490 342,455 340,420 347,407 345,388 327,385 326,355 320,347 343,338 345,322 362,320 369,302 358,292 358,263 375,247 390,238 400,219 408,227 438,225 460,215 465,205 480,198 515,196 545,203 548,183 563,170 575,178 590,177 596,187 610,175 640,178 660,167 672,155 682,160 706,153 697,167 722,161 738,147 752,112 775,110 822,129 838,107 868,98 881,86 892,97 897,118 917,110 921,131 950,133 960,143 970,128 978,130 980,113 1000,107 1017,118 1022,147 1045,138 1073,186 1098,177 1129,207 1115,237 1147,255 1150,285 1163,300 1162,325 1144,342 1146,365 1159,382 1152,402 1136,412 1145,421 1155,412 1157,440 1165,460`,
c:`1240,470 1260,1100 760,1100 705,1050 680,1025`,
l:[`350,516 370,508 390,499 388,465 400,450 408,430 400,425 410,425 413,407 480,410 488,413 492,404 512,409 525,400 550,398 552,377 575,382 578,396 592,398 591,411 570,412 564,420 571,435 570,460 577,482 597,488 625,475 660,470 668,463 685,461 697,432 715,433 716,390 735,381 770,382 775,375 810,374 831,358 853,378 900,389 925,410 937,432 949,433 943,452 920,450 925,480 943,495 935,508 915,512 913,545 895,553 889,570 910,590 917,605 935,623 930,650 920,660 920,677 930,682 958,672 980,678 1003,702 1022,703 1028,686 1050,688 1072,690 1076,680 1105,679 1115,672 1150,667`,
`390,499 398,513 385,530 393,555 414,580 393,577 390,595 394,635 440,631 450,600 468,598 474,567 485,577 492,572 498,583 545,583 552,603 580,617 583,598 597,562 621,556 625,535 620,513 605,505 597,488`,
`930,682 910,687 890,730 870,762 898,790 900,825 893,838 835,835 825,822 805,825 780,818 777,835 765,852 758,875 767,885 765,905 752,920 770,950 745,946 730,970 705,973 677,977`,
`1160,440 1142,482 1158,495 1155,530 1161,590 1160,620 1146,632 1153,660 1150,667 1145,695 1155,710 1158,738 1190,760 1188,815 1168,820 1168,830 1180,822 1190,850 1192,882 1178,882 1194,902 1185,930 1167,950 1175,952 1205,926 1250,917 1290,903 1325,925`]},
{t:'translate(700 360) scale(.35714 .33333)',
o:`75,262 80,279 110,284 120,290 120,275 133,275 135,262 160,247 163,231 175,237 195,235 203,243 207,225 220,212 228,228 238,235 240,247 255,240 268,250 272,262 308,278 312,302 325,317 332,305 357,303 362,320 415,322 420,317 435,318 440,325 485,330 490,320 497,330 541,318 541,305 575,316 600,310 635,291 642,295 643,317 663,320 668,295 683,290 683,275 698,260 695,240 711,228 705,207 692,188 722,193 732,180 725,168 735,160 745,133 768,131 764,108 772,104 800,110 825,111 850,124 865,120 905,137 915,154 922,135 945,118 962,110 970,117 998,105 1001,92 1050,91 1070,83 1073,70 1082,70 1092,60 1110,71 1118,99 1140,94 1172,95 1182,85 1185,66 1184,41 1194,43 1208,64 1197,85 1208,100 1208,123 1220,134 1262,142 1280,158 1305,180 1350,184 1357,197 1373,203 1388,240 1380,265 1384,320 1393,325 1388,345 1395,375 1415,395 1420,415 1432,425 1438,460 1432,490 1420,515 1417,545 1410,570 1412,590 1403,605 1405,650 1395,655 1390,690 1380,725 1368,745 1362,775 1350,805 1347,832 1332,850 1327,880 1300,912 1275,947 1275,970 1262,1000 1256,1030 1230,1024 1215,1018 1200,1025 1193,1007 1170,1005 1150,992 1122,980 1135,930 1147,920 1145,888 1097,908 1080,903 1083,888 1097,870 1108,820 1083,790 1062,793 1058,783 1030,770 1015,757 998,754 985,770 968,775 950,768 943,750 925,744 910,750 895,722 880,732 868,750 872,765 855,790 853,812 875,827 905,822 903,833 887,845 898,862 950,878 958,890 948,905 946,928 920,928 915,935 885,945 860,932 833,940 832,962 820,980 805,988 780,992 755,1010 720,1020 710,1036 680,1044 665,1030 648,1027 622,1040 615,1058 600,1062 580,1060 570,1085 578,1112 570,1126 550,1123 547,1140 530,1143 500,1132 475,1130 460,1138 452,1133 437,1140 432,1151 410,1143 390,1133 372,1145 368,1155 318,1153 297,1165 307,1195 305,1210 290,1225 285,1240 293,1240 290,1252 272,1253`,
c:`100,1100 60,300`,
l:[`541,318 550,335 556,362 535,362 515,405 525,440 517,450 532,457 525,480 513,480 520,500 505,503 500,517 487,520 505,545 490,568 470,568 475,580 483,600 478,620 450,615 445,645 432,655 432,675 412,670 375,660 357,668 348,708 300,712 275,704 255,715 232,718 230,743`,
`490,568 510,580 537,607 560,595 575,600 575,618 563,620 575,645 592,680 577,690 577,703 600,715 612,712 618,703 625,717 632,712 650,710 690,708 698,688 708,700 738,703 760,684 768,703 785,712 795,692 825,690 842,700 852,720 868,706 898,714 895,722`,
`348,708 350,733 362,745 405,745 410,767 430,787 455,780 485,795 495,812 520,824 540,807 570,815 590,790 600,772 630,757 632,712`,
`998,105 1001,125 995,148 1017,152 1025,170 1018,190 1030,215 1035,235 1052,250 1043,275 1032,285 1022,330 1007,355 1017,390 1045,383 1053,365 1067,345 1063,365 1083,392 1103,393 1112,410 1110,430 1125,450 1122,470 1137,495 1132,515 1148,512 1170,535 1165,555 1182,572 1170,608 1153,603 1135,630 1117,650 1090,650 1092,668 1075,695 1020,703 1015,712 1027,735 1030,770`,
`230,743 245,762 228,795 235,812 265,810 245,830 230,858 243,865 250,910 272,930 290,975 280,985 297,1008 315,1010 333,1030 318,1040 318,1065 335,1080 352,1077 370,1113 390,1133`],
x:'<path d="M1028 743L1040 743L1034 770L1029 768Z" fill="#fff" stroke="#232323" stroke-width="1" vector-effect="non-scaling-stroke"/>'},
{t:'translate(340 620) scale(.33333)',
o:`677,15 680,65 705,90 693,108 675,107 640,114 610,112 590,107 583,120 560,125 543,142 540,155 532,158 525,183 505,187 500,168 500,175 473,173 450,192 447,207 410,210 408,200 400,220 392,212 370,213 367,225 372,248 398,250 398,265 383,280 358,278 347,300 353,318 380,318 383,330 370,343 375,370 388,380 415,383 420,395 405,420 375,435 372,450 350,452 322,437 310,468 298,468 298,452 280,452 275,477 250,492 248,500 265,507 283,507 282,520 260,520 245,523 237,512 222,515 215,538 182,545 170,522 183,490 163,465 173,450 165,437 143,455 145,470 125,478 97,498 98,520 90,535 62,540 50,553 60,582 82,584 93,575 98,598 122,627 105,637 108,662 95,655 62,672 62,682 85,690 85,702 102,718 107,740 122,738 130,752 127,797 155,803 172,825 215,828 240,848 260,842 292,842 303,860 305,905 350,912 355,933 342,928 335,938 350,955 365,958 373,973 370,995 362,1003 375,1030 408,1036 403,1020 410,1010 403,990 408,950 425,952 430,940 425,930 440,897 465,885 468,848 497,845 503,823 527,810 543,815 543,787 565,757 622,745 640,743 655,733 675,740 697,737 720,757 745,717 795,698 807,717 818,685 885,730 912,755 912,745 945,738 960,720 980,703 980,665 990,627 1010,635 1045,635 1070,617 1078,630 1122,635 1128,612 1148,578 1148,555 1160,537 1172,522 1193,523 1203,545 1228,537 1228,508 1270,490 1273,452 1295,470 1307,495 1343,514 1370,480 1373,472`,
c:`1320,390 1330,0 700,0`,
l:[`705,90 735,112 765,115 770,132 795,158 820,163 853,130 895,122 897,135 925,140 965,135 973,150 963,190 1000,197 1015,208 1015,245 990,290 965,285 960,302 940,313 925,315 915,325 898,320 880,297 887,275 870,265 845,250 825,262 795,265 790,235 762,222 763,213 790,215 815,190 820,163`,
`795,265 775,283 745,285 750,310 740,325 722,322 715,306 690,307 703,340 685,350 705,370 735,377 742,392 725,430 735,445 715,462 697,452 680,458 670,475 640,480 637,500 625,522 652,537 645,553 625,557 600,548 580,567 570,585 540,592 533,605 527,622 537,640 552,635 555,665 622,720 622,745`,
`420,395 432,403 445,408 465,398 468,417 497,447 493,465 518,487 505,530 512,543 540,550 563,545 580,567`,
`1015,245 1042,277 1065,268 1085,295 1115,278 1165,290 1180,292 1195,302 1193,335 1235,332 1265,322 1275,340 1272,370 1305,410 1320,432 1360,452 1365,460 1373,472`]}];
let fills='',lines='';
for(const k of tiles){const o=rough(P(k.o));
 fills+=`<path transform="${k.t}" d="${D(o.concat(P(k.c)))}Z" fill="#e77148"/>`;
 lines+=`<g transform="${k.t}" fill="none" stroke="#232323" stroke-width="1.150" stroke-linejoin="round">`+[o,...k.l.map(s=>rough(P(s)))].map(p=>`<path vector-effect="non-scaling-stroke" d="${D(p)}"/>`).join('')+(k.x||'')+'</g>';}
g+=fills+lines;

/* selection frame and handles */
g+='<g fill="#fff" stroke="#3a8fc8">';
for(const x of [194.5,792.5,1390.5])for(const y of [250.5,665.5,1080.5])if(!(x==792.5&&y==665.5))g+=`<rect x="${x}" y="${y}" width="10" height="10"/>`;
g+='</g><rect x="194.500" y="250.500" width="1206" height="840" fill="none" stroke="#3a93c8"/><rect x="194.500" y="250.500" width="1206" height="840" fill="none" stroke="#5b0030" stroke-dasharray="4 2"/>';
document.getElementById('canvas').innerHTML=g;
</script>
</body>
</html>
